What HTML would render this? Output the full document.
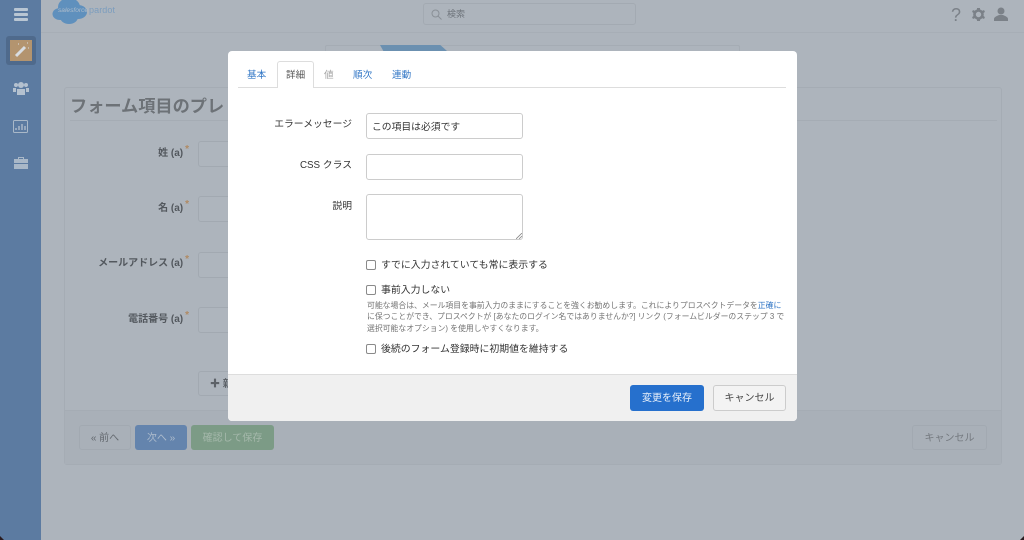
<!DOCTYPE html>
<html lang="ja"><head><meta charset="utf-8"><style>
*{box-sizing:border-box}
html,body{margin:0;padding:0}
body{width:1024px;height:540px;overflow:hidden;position:relative;background:#adb4bc;font-family:"Liberation Sans","Noto Sans CJK JP",sans-serif;color:#333}
.a{position:absolute;white-space:nowrap}
.lbl{font-size:10px;font-weight:700;color:#53585e;text-align:right;right:835px}
.lbl i{color:#b08a63;font-style:normal;position:relative;top:-4px;font-size:10px;margin-left:2px}
.bgin{left:198px;width:60px;height:26px;border:1px solid #a2a9b1;border-radius:3px;background:#aeb5bd}
.bbtn{height:25px;border-radius:3px;font-size:10px;text-align:center;line-height:27px}
.tab{top:70px;font-size:9.6px;color:#2f75c5;line-height:12px}
.l2{font-size:9.8px;color:#333;text-align:right;right:672px}
.in{left:366px;width:157px;border:1px solid #ccc;border-radius:3px;background:#fff}
.cb{left:366px;width:10px;height:10px;border:1px solid #8a8a8a;border-radius:2px;background:#fff}
.ck{left:381px;font-size:9.9px;color:#333;line-height:14px}
.h{left:367px;font-size:7.85px;color:#737373;line-height:11px}
</style></head><body>
<div class="a" style="left:0;top:0;width:41px;height:540px;background:#5c7ba1"></div>
<div class="a" style="left:14px;top:8px;width:14px;height:3px;background:#b9c6d3;border-radius:1px"></div>
<div class="a" style="left:14px;top:13px;width:14px;height:3px;background:#b9c6d3;border-radius:1px"></div>
<div class="a" style="left:14px;top:18px;width:14px;height:3px;background:#b9c6d3;border-radius:1px"></div>
<div class="a" style="left:6px;top:36px;width:30px;height:29px;background:#4f6a8c;border-radius:3px"></div>
<div class="a" style="left:10px;top:40px;width:22px;height:21px;background:#b3946f"></div>
<svg class="a" style="left:10px;top:40px" width="22" height="21"><path d="M6 16 L15 7" stroke="#d8dde2" stroke-width="3"/><path d="M8 4h1M17 3h1M18 8h1" stroke="#d8dde2"/></svg>
<svg class="a" style="left:13px;top:81px" width="16" height="14" fill="#b4c1cf"><circle cx="3" cy="4" r="2"/><circle cx="13" cy="4" r="2"/><circle cx="8" cy="4" r="3"/><path d="M0 7h3v4H0zM13 7h3v4h-3zM4 8h8v6H4z"/></svg>
<svg class="a" style="left:13px;top:120px" width="15" height="13" fill="none" stroke="#a9b8c8"><rect x=".5" y=".5" width="14" height="12" rx="1"/><path d="M3 10V8M6 10V6M9 10V4M12 10V6" stroke-width="1.500"/></svg>
<svg class="a" style="left:14px;top:156px" width="14" height="13" fill="#a9b8c8"><path d="M4 3V1h6v2h4v4H0V3zM5 2v1h4V2zM0 8h14v5H0z"/></svg>

<svg class="a" style="left:52px;top:0" width="36" height="25" fill="#5f90bd"><ellipse cx="17" cy="7" rx="11" ry="9"/><ellipse cx="8" cy="14" rx="7.500" ry="6"/><ellipse cx="26" cy="12" rx="9" ry="7"/><ellipse cx="17" cy="17" rx="9" ry="7"/></svg>
<div class="a" style="left:58px;top:6px;font-size:6.6px;font-style:italic;color:#adbccb;line-height:10px">salesforce</div>
<div class="a" style="left:89px;top:3px;font-size:9px;color:#7b9dbe;line-height:14px;letter-spacing:.1px">pardot</div>
<div class="a" style="left:423px;top:3px;width:213px;height:22px;border:1px solid #a3aab2;border-radius:3px"></div>
<svg class="a" style="left:431px;top:9px" width="11" height="11" fill="none" stroke="#8a9097"><circle cx="4.500" cy="4.500" r="3.500"/><path d="M7 7l3.500 3.500"/></svg>
<div class="a" style="left:447px;top:8px;font-size:9px;color:#6e747b;line-height:12px">検索</div>
<div class="a" style="left:41px;top:32px;width:983px;height:1px;background:#a7aeb6"></div>
<div class="a" style="left:951px;top:5px;font-size:18px;line-height:20px;color:#7b8188">?</div>
<svg class="a" style="left:972px;top:8px" width="13" height="13"><circle cx="6.500" cy="6.500" r="4" fill="none" stroke="#7b8188" stroke-width="2.600"/><path d="M5 0h3v2H5zM5 11h3v2H5zM0 3l2-1 1 2-2 1zM13 3l-2-1-1 2 2 1zM0 10l2 1 1-2-2-1zM13 10l-2 1-1-2 2-1z" fill="#7b8188"/></svg>
<svg class="a" style="left:994px;top:7px" width="14" height="14" fill="#7b8188"><circle cx="7" cy="4" r="3.500"/><path d="M0 14v-2c0-2 3-3 5-4h4c2 1 5 2 5 4v2z"/></svg>

<div class="a" style="left:325px;top:45px;width:415px;height:10px;border:1px solid #a5acb4;border-radius:2px"></div>
<div class="a" style="left:380px;top:45px;width:67px;height:6px;background:#6b90b0;clip-path:polygon(0 0,90% 0,100% 100%,5% 100%)"></div>

<div class="a" style="left:64px;top:87px;width:938px;height:378px;border:1px solid #a5acb4;border-radius:3px"></div>
<div class="a" style="left:70px;top:94px;font-size:17.2px;font-weight:700;color:#6d7277;line-height:24px">フォーム項目のプレ</div>
<div class="a" style="left:70px;top:120px;width:927px;height:1px;background:#a5acb4"></div>
<div class="a lbl" style="top:147px;line-height:14px">姓 (a)<i>*</i></div>
<div class="a bgin" style="top:141px"></div>
<div class="a lbl" style="top:202px;line-height:14px">名 (a)<i>*</i></div>
<div class="a bgin" style="top:196px"></div>
<div class="a lbl" style="top:257px;line-height:14px">メールアドレス (a)<i>*</i></div>
<div class="a bgin" style="top:252px"></div>
<div class="a lbl" style="top:313px;line-height:14px">電話番号 (a)<i>*</i></div>
<div class="a bgin" style="top:307px"></div>
<div class="a" style="left:198px;top:371px;width:60px;height:25px;border:1px solid #a2a9b1;border-radius:3px;font-size:10px;color:#5d6268;font-weight:700;line-height:25px;padding-left:11px">✚ 新</div>
<div class="a" style="left:65px;top:410px;width:936px;height:54px;background:#a9b0b8;border-top:1px solid #a5acb4"></div>
<div class="a bbtn" style="left:79px;top:425px;width:52px;border:1px solid #a2a9b1;color:#63686e;line-height:25px">« 前へ</div>
<div class="a bbtn" style="left:135px;top:425px;width:52px;background:#6484ad;color:#aebccd">次へ »</div>
<div class="a bbtn" style="left:191px;top:425px;width:83px;background:#7c9b86;color:#a5b8ab">確認して保存</div>
<div class="a bbtn" style="left:912px;top:425px;width:75px;border:1px solid #a2a9b1;color:#74797f;line-height:25px">キャンセル</div>

<div class="a" style="left:228px;top:51px;width:569px;height:370px;background:#fff;border-radius:4px;overflow:hidden"></div>
<div class="a" style="left:228px;top:374px;width:569px;height:47px;background:#f0f0f0;border-top:1px solid #ddd;border-radius:0 0 4px 4px"></div>
<div class="a" style="left:238px;top:87px;width:548px;height:1px;background:#ddd"></div>
<div class="a" style="left:277px;top:61px;width:37px;height:27px;background:#fff;border:1px solid #ddd;border-bottom:0;border-radius:3px 3px 0 0"></div>
<div class="a tab" style="left:247px">基本</div>
<div class="a tab" style="left:286px;color:#555">詳細</div>
<div class="a tab" style="left:324px;color:#a3a3a3">値</div>
<div class="a tab" style="left:353px">順次</div>
<div class="a tab" style="left:392px">連動</div>

<div class="a l2" style="top:118px;line-height:14px">エラーメッセージ</div>
<div class="a in" style="top:113px;height:26px;font-size:9.8px;line-height:27px;padding-left:5px">この項目は必須です</div>
<div class="a l2" style="top:159px;line-height:14px">CSS クラス</div>
<div class="a in" style="top:154px;height:26px"></div>
<div class="a l2" style="top:200px;line-height:14px">説明</div>
<div class="a in" style="top:194px;height:46px"></div>
<svg class="a" style="left:516px;top:233px" width="6" height="6" stroke="#888" stroke-width=".8"><path d="M0 6L6 0M3 6L6 3"/></svg>

<div class="a cb" style="top:260px"></div>
<div class="a ck" style="top:259px">すでに入力されていても常に表示する</div>
<div class="a cb" style="top:285px"></div>
<div class="a ck" style="top:284px">事前入力しない</div>
<div class="a h" style="top:300px">可能な場合は、メール項目を事前入力のままにすることを強くお勧めします。これによりプロスペクトデータを<span style="color:#2f75c5">正確に</span></div>
<div class="a h" style="top:311px">に保つことができ、プロスペクトが [あなたのログイン名ではありませんか?] リンク (フォームビルダーのステップ 3 で</div>
<div class="a h" style="top:323px">選択可能なオプション) を使用しやすくなります。</div>
<div class="a cb" style="top:344px"></div>
<div class="a ck" style="top:343px">後続のフォーム登録時に初期値を維持する</div>

<div class="a bbtn" style="left:630px;top:385px;width:74px;height:26px;background:#2670cd;color:#e8f0fa;line-height:28px">変更を保存</div>
<div class="a bbtn" style="left:713px;top:385px;width:73px;height:26px;background:#f3f3f3;border:1px solid #ccc;color:#444;line-height:26px">キャンセル</div>

<div class="a" style="left:0;top:536px;width:4px;height:4px;background:#2a1c20;clip-path:polygon(0 0,100% 100%,0 100%)"></div>
<div class="a" style="left:1020px;top:536px;width:4px;height:4px;background:#2a1c20;clip-path:polygon(100% 0,100% 100%,0 100%)"></div>
</body></html>
